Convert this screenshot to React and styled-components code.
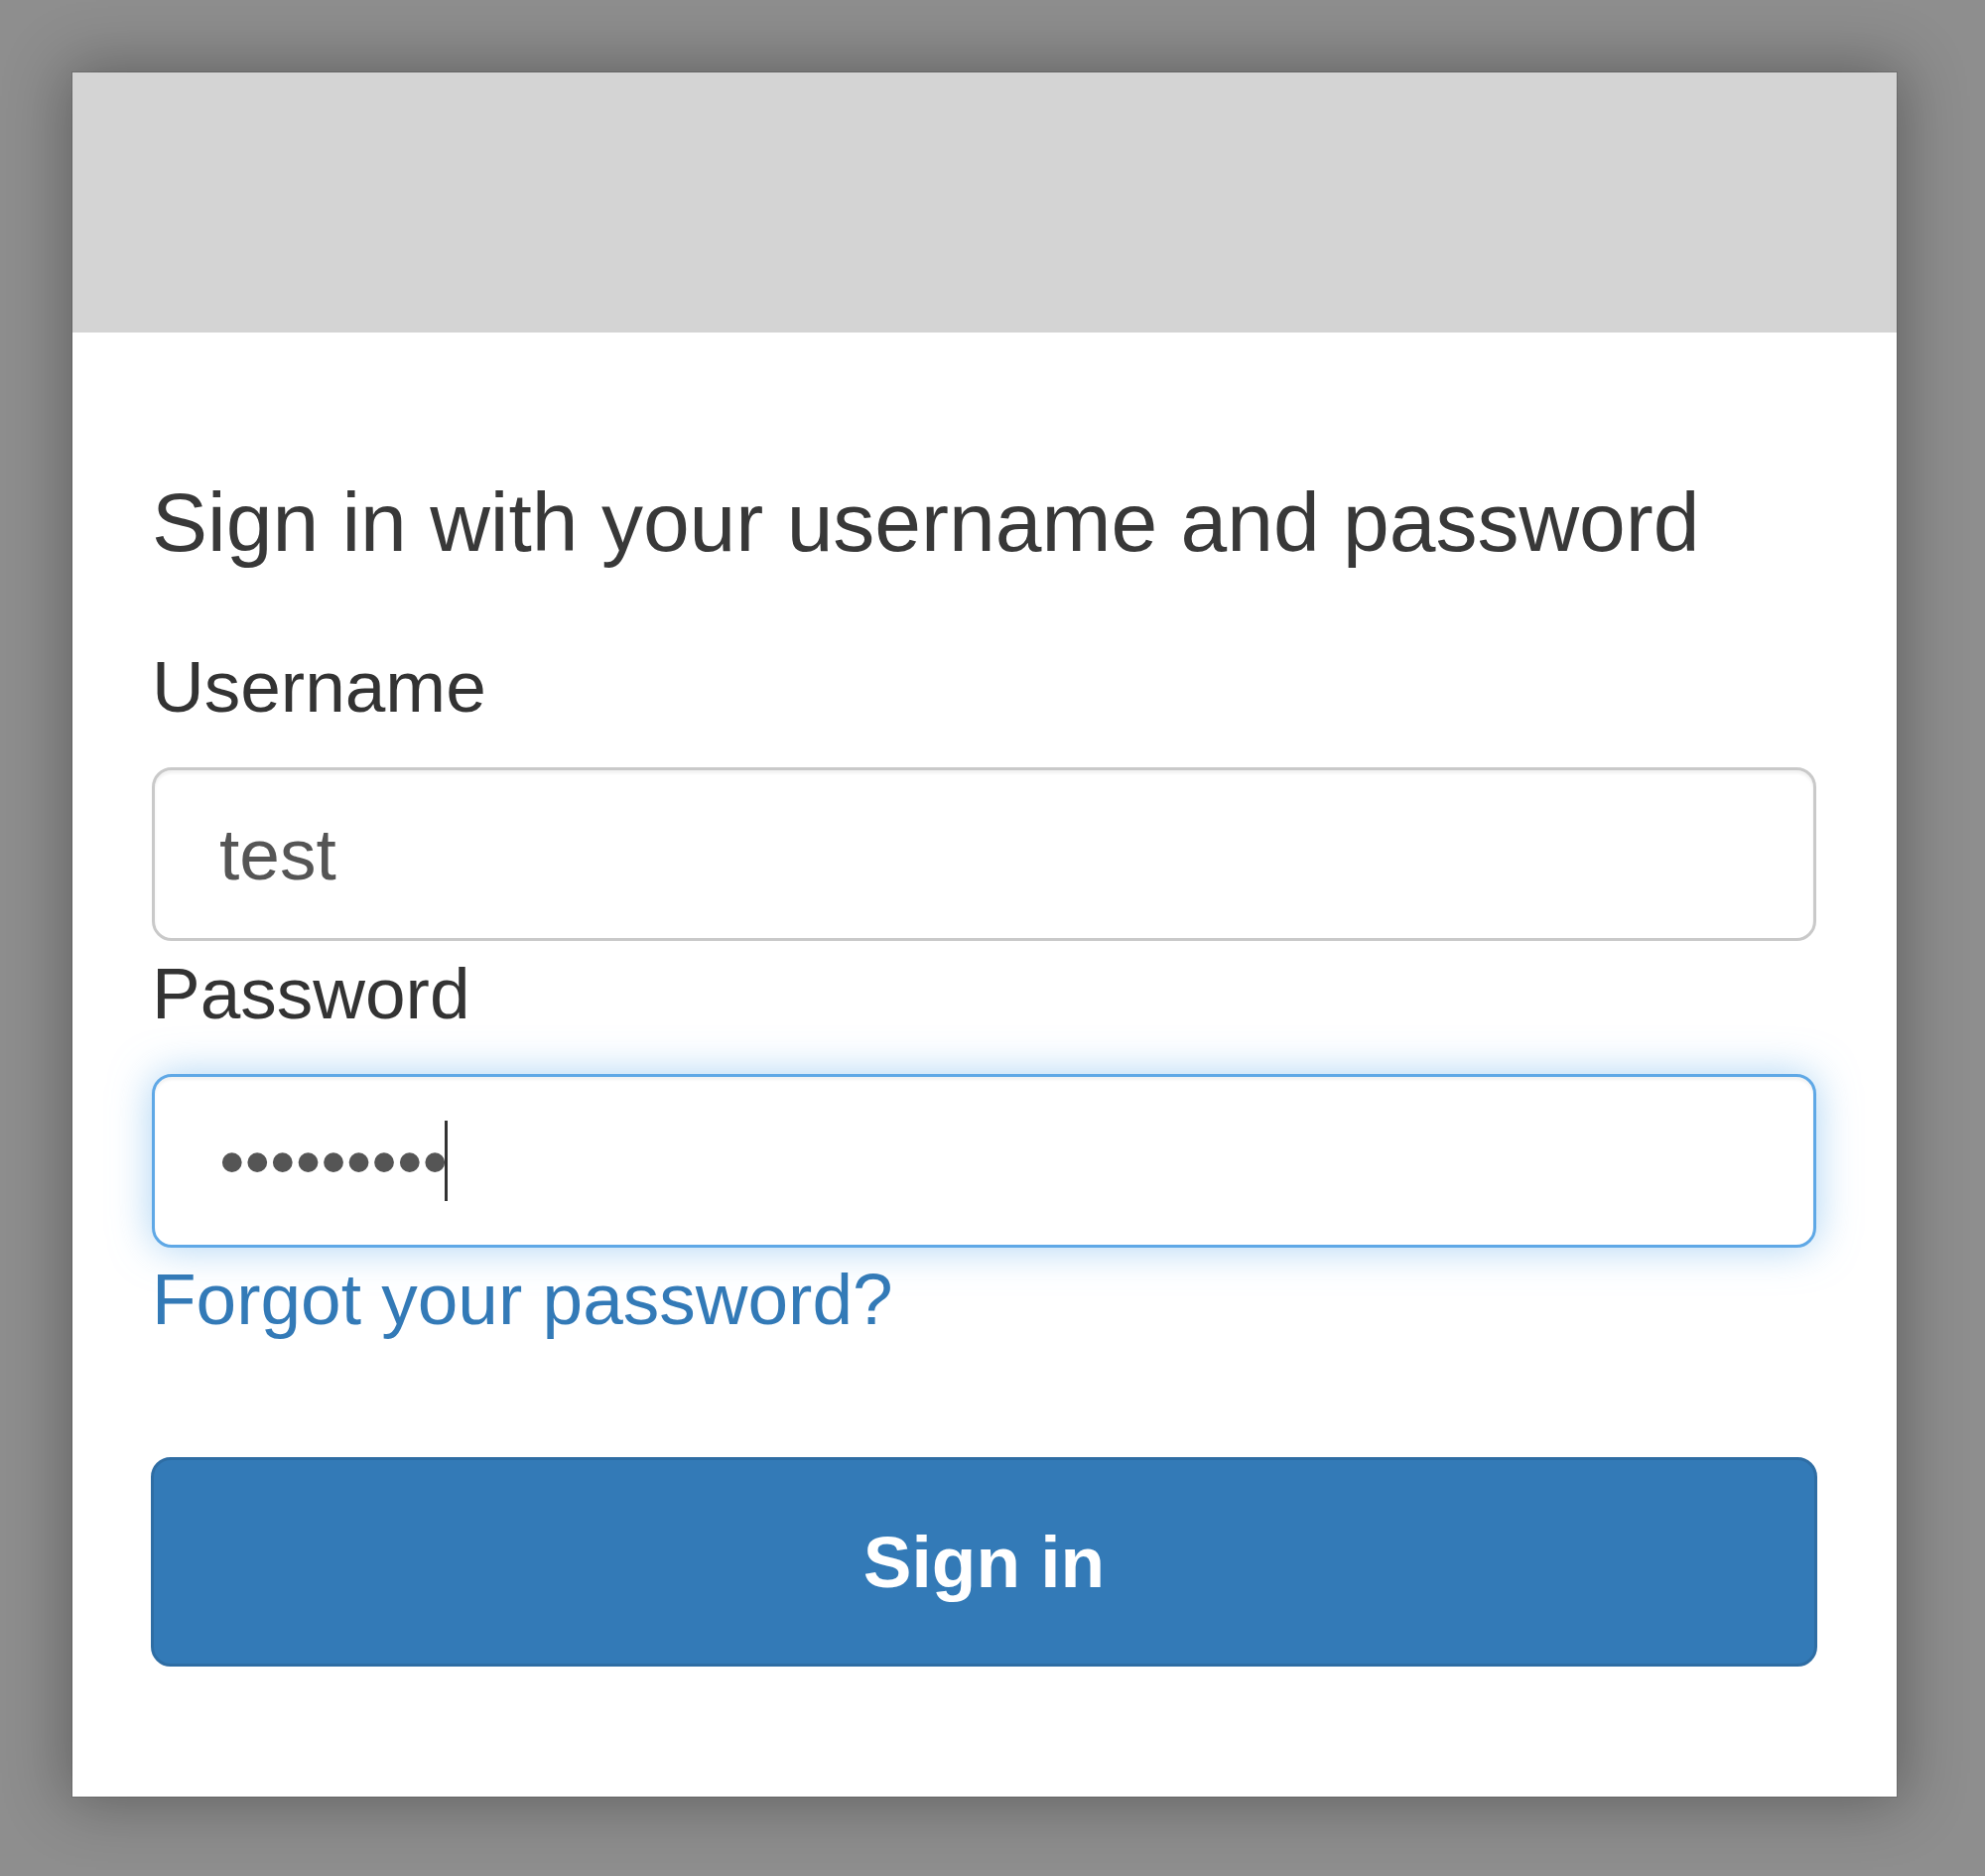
import styled, { createGlobalStyle } from 'styled-components';

const GlobalStyle = createGlobalStyle`
  html, body {
    margin: 0;
    padding: 0;
    background: #8e8e8e;
    font-family: "Liberation Sans", Arial, Helvetica, sans-serif;
  }
`;

const Page = styled.div`
  min-height: 1890px;
  padding: 73px 0 0 73px;
  box-sizing: border-box;
`;

const Card = styled.div`
  width: 1838px;
  background: #ffffff;
  box-shadow: 0 0 60px 6px rgba(0, 0, 0, 0.32);
  outline: 1px solid rgba(0, 0, 0, 0.12);
`;

const Header = styled.div`
  height: 262px;
  background: #d4d4d4;
`;

const Body = styled.form`
  display: flex;
  flex-direction: column;
  padding: 145px 81px 131px 80px;
`;

const Heading = styled.h3`
  margin: 0 0 80px;
  font-size: 84px;
  line-height: 92px;
  font-weight: 400;
  color: #383838;
`;

const Label = styled.label`
  display: block;
  margin: ${(p) => (p.$first ? '0' : '13px')} 0 41px;
  font-size: 73px;
  line-height: 80px;
  color: #333333;
`;

const Field = styled.div`
  display: flex;
  align-items: center;
  height: 175px;
  box-sizing: border-box;
  padding: 0 65px;
  border: 3px solid ${(p) => (p.$focused ? '#5fa8e6' : '#c9c9c9')};
  border-radius: 20px;
  background: #ffffff;
  box-shadow: ${(p) =>
    p.$focused
      ? 'inset 0 3px 3px rgba(0,0,0,0.05), 0 0 40px rgba(102,175,233,0.55)'
      : 'inset 0 3px 3px rgba(0,0,0,0.06)'};
`;

const Input = styled.input`
  flex: 1;
  min-width: 0;
  border: 0;
  outline: none;
  padding: 0;
  background: transparent;
  font-family: inherit;
  font-size: 73px;
  line-height: 80px;
  color: #555555;
`;

const Dots = styled.span`
  font-size: 73px;
  line-height: 80px;
  color: #555555;
`;

const Caret = styled.span`
  display: inline-block;
  width: 3px;
  height: 81px;
  margin-left: -3px;
  background: #333333;
`;

const ForgotLink = styled.a`
  display: block;
  margin: 12px 0 119px;
  font-size: 73px;
  line-height: 80px;
  color: #337ab7;
  text-decoration: none;
`;

const SubmitButton = styled.button`
  height: 211px;
  margin: 0 -1px 0 -1px;
  border: 3px solid #2e6da4;
  border-radius: 20px;
  background: #337ab7;
  color: #ffffff;
  font-family: inherit;
  font-size: 73px;
  font-weight: 700;
  cursor: pointer;
`;

export default function App() {
  return (
    <Page>
      <GlobalStyle />
      <Card>
        <Header />
        <Body onSubmit={(e) => e.preventDefault()}>
          <Heading>Sign in with your username and password</Heading>
          <Label $first htmlFor="username">Username</Label>
          <Field>
            <Input id="username" type="text" defaultValue="test" />
          </Field>
          <Label htmlFor="password">Password</Label>
          <Field $focused id="password">
            <Dots>•••••••••</Dots>
            <Caret />
          </Field>
          <ForgotLink href="#">Forgot your password?</ForgotLink>
          <SubmitButton type="submit">Sign in</SubmitButton>
        </Body>
      </Card>
    </Page>
  );
}
